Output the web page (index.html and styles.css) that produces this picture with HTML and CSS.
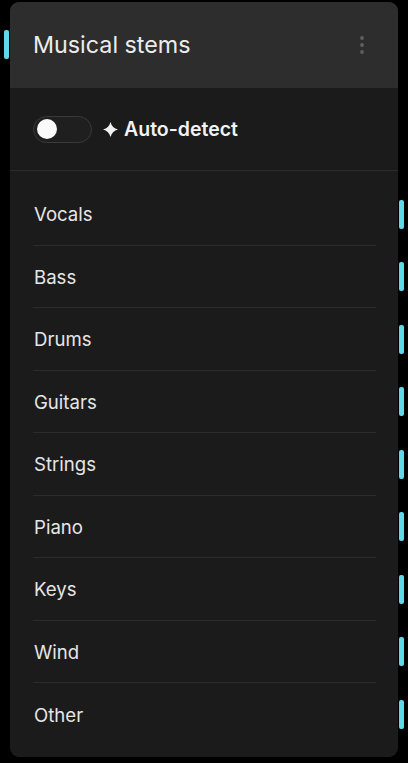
FILE: index.html
```html
<!DOCTYPE html>
<html lang="en">
<head>
    <meta charset="UTF-8">
    <meta name="viewport" content="width=device-width, initial-scale=1.0">
    <title>Musical stems</title>
    <link rel="stylesheet" href="styles.css">
</head>
<body>
    <div class="panel">
        <span class="handle handle-left"></span>

        <div class="panel-header">
            <h1>Musical stems</h1>
            <svg class="kebab" width="6" height="20" viewBox="0 0 6 20">
                <circle cx="3" cy="3" r="1.9" fill="#5f5f5f"/>
                <circle cx="3" cy="10" r="1.9" fill="#5f5f5f"/>
                <circle cx="3" cy="17" r="1.9" fill="#5f5f5f"/>
            </svg>
        </div>

        <div class="auto-detect">
            <span class="toggle"><span class="knob"></span></span>
            <svg class="sparkle" width="15" height="15" viewBox="0 0 16 16">
                <path d="M8 0 Q9.6 6.4 16 8 Q9.6 9.6 8 16 Q6.4 9.6 0 8 Q6.4 6.4 8 0 Z" fill="#f2f2f2"/>
            </svg>
            <span class="auto-label">Auto-detect</span>
        </div>

        <ul class="stems">
            <li class="stem">Vocals<span class="handle handle-right"></span></li>
            <li class="stem">Bass<span class="handle handle-right"></span></li>
            <li class="stem">Drums<span class="handle handle-right"></span></li>
            <li class="stem">Guitars<span class="handle handle-right"></span></li>
            <li class="stem">Strings<span class="handle handle-right"></span></li>
            <li class="stem">Piano<span class="handle handle-right"></span></li>
            <li class="stem">Keys<span class="handle handle-right"></span></li>
            <li class="stem">Wind<span class="handle handle-right"></span></li>
            <li class="stem">Other<span class="handle handle-right"></span></li>
        </ul>
    </div>
</body>
</html>
```

FILE: styles.css
```css
* {
    margin: 0;
    padding: 0;
    box-sizing: border-box;
}

body {
    font-family: Inter, 'Noto Sans', sans-serif;
    background: #000;
    padding: 2px 10px 0 10px;
    width: 408px;
    height: 763px;
    overflow: hidden;
}

.panel {
    position: relative;
    width: 388px;
    height: 755px;
    background: #1b1b1b;
    border-radius: 9px;
}

.panel-header {
    height: 86px;
    background: #2d2d2d;
    border-radius: 9px 9px 0 0;
    display: flex;
    align-items: center;
    justify-content: space-between;
    padding: 0 33px 0 23px;
}

.panel-header h1 {
    font-size: 23.3px;
    font-weight: 400;
    color: #ececec;
    margin-top: -1px;
}

.kebab {
    margin-top: -1px;
}

.handle {
    position: absolute;
    width: 5px;
    height: 29px;
    background: #5fd8ea;
    border-radius: 2px;
}

.handle-left {
    left: -6px;
    top: 28px;
}

.handle-right {
    top: 50%;
    margin-top: -14px;
}

.auto-detect {
    height: 83px;
    border-bottom: 1px solid #2b2b2b;
    display: flex;
    align-items: center;
    padding: 0 23px;
}

.toggle {
    width: 59px;
    height: 27px;
    border: 1px solid #3a3a3a;
    border-radius: 14px;
    background: #1f1f1f;
    display: flex;
    align-items: center;
    padding-left: 3px;
}

.knob {
    width: 20px;
    height: 20px;
    border-radius: 50%;
    background: #fafafa;
}

.sparkle {
    margin-left: 11px;
    margin-right: 6px;
}

.auto-label {
    color: #f2f2f2;
    font-size: 19.5px;
    font-weight: 600;
    margin-top: -1px;
}

.stems {
    list-style: none;
    padding: 12px 22px 0 23px;
}

.stem {
    position: relative;
    height: 62.5px;
    display: flex;
    align-items: center;
    font-size: 18.6px;
    color: #e6e6e6;
    border-bottom: 1px solid #2b2b2b;
    padding-left: 1px;
    padding-top: 1px;
}

.stem:last-child {
    border-bottom: none;
}

.stem .handle-right {
    right: -28px;
}
```
